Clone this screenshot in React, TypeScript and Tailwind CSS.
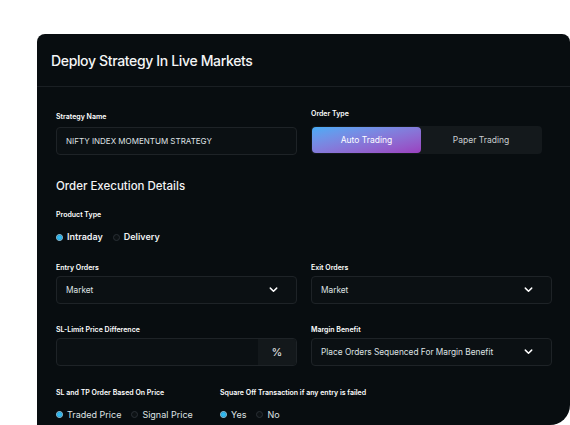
import React from "react";

const Chevron = () => (
  <svg width="11" height="11" viewBox="0 0 24 24" fill="none" stroke="#ffffff" strokeWidth="3.2" strokeLinecap="round" strokeLinejoin="round">
    <path d="M5 9l7 7 7-7" />
  </svg>
);

const Radio = ({ checked, label, bold }: { checked?: boolean; label: string; bold?: boolean }) => (
  <div className="flex items-center gap-[4px]">
    {checked ? (
      <span className="flex h-[7px] w-[7px] items-center justify-center rounded-full border border-[#9fdcf7] bg-[#1a2a33]">
        <span className="h-[5px] w-[5px] rounded-full bg-[#2fb8f0]" />
      </span>
    ) : (
      <span className="h-[7px] w-[7px] rounded-full border border-[#2a3035] bg-[#0d1215]" />
    )}
    <span className={bold ? "text-[9px] font-semibold text-[#eef0f2]" : "text-[9px] text-[#dfe2e4]"}>{label}</span>
  </div>
);

const Label = ({ children, className = "" }: { children: React.ReactNode; className?: string }) => (
  <div className={`text-[7px] font-semibold leading-[9px] text-white ${className}`}>{children}</div>
);

const Select = ({ value }: { value: string }) => (
  <div className="flex h-[28px] items-center justify-between rounded-[4px] border border-[#1e2327] bg-[#0b1013] pl-[9px] pr-[17px]">
    <span className="text-[8.3px] text-[#dfe2e4]">{value}</span>
    <Chevron />
  </div>
);

export default function App() {
  return (
    <div className="h-[425px] w-[570px] overflow-hidden bg-white pl-[37px] pt-[34px]" style={{ fontFamily: "Inter, 'Noto Sans', sans-serif" }}>
      <div className="h-[391px] w-[533px] overflow-hidden rounded-tl-[8px] rounded-tr-[8px] rounded-br-[20px] bg-[#080d10]">
        <div className="flex h-[53px] items-center border-b border-[#1a1f23] px-[14px]">
          <h1 className="text-[14px] font-medium tracking-[-0.35px] text-[#f4f5f6]">Deploy Strategy In Live Markets</h1>
        </div>
        <div className="pl-[19px] pr-[18px]">
          <div className="flex gap-[14px] pt-[22px]">
            <div className="w-[241px]">
              <Label className="mt-[3px] mb-[6px]">Strategy Name</Label>
              <div className="flex h-[28px] items-center rounded-[4px] border border-[#1e2327] bg-[#0b1013] px-[9px]">
                <span className="text-[8px] text-[#dfe2e4]">NIFTY INDEX MOMENTUM STRATEGY</span>
              </div>
            </div>
            <div className="w-[241px]">
              <Label className="mb-[8px]">Order Type</Label>
              <div className="flex h-[28px] w-[231px] items-center rounded-[4px] bg-[#14191c] p-[1px]">
                <div className="flex h-[26px] w-[109px] items-center justify-center rounded-[4px] bg-gradient-to-br from-[#44acf6] to-[#9a3fbf] text-[8.5px] text-white">
                  Auto Trading
                </div>
                <div className="flex flex-1 items-center justify-center text-[8.5px] text-[#c9cdd0]">Paper Trading</div>
              </div>
            </div>
          </div>

          <div className="mt-[23px] text-[11.5px] font-medium text-[#f2f3f4]">Order Execution Details</div>

          <Label className="mt-[15px]">Product Type</Label>
          <div className="mt-[11px] flex items-center gap-[10px]">
            <Radio checked bold label="Intraday" />
            <Radio bold label="Delivery" />
          </div>

          <div className="mt-[19px] flex gap-[14px]">
            <div className="w-[241px]">
              <Label className="mb-[4px]">Entry Orders</Label>
              <Select value="Market" />
            </div>
            <div className="w-[241px]">
              <Label className="mb-[4px]">Exit Orders</Label>
              <Select value="Market" />
            </div>
          </div>

          <div className="mt-[21px] flex gap-[14px]">
            <div className="w-[241px]">
              <Label className="mb-[4px]">SL-Limit Price Difference</Label>
              <div className="flex h-[28px] overflow-hidden rounded-[4px] border border-[#1e2327] bg-[#0b1013]">
                <div className="flex-1" />
                <div className="flex w-[38px] items-center justify-center bg-[#13181b] text-[11px] text-[#e6e8ea]">%</div>
              </div>
            </div>
            <div className="w-[241px]">
              <Label className="mb-[4px]">Margin Benefit</Label>
              <Select value="Place Orders Sequenced For Margin Benefit" />
            </div>
          </div>

          <div className="mt-[22px] flex">
            <div className="w-[164px]">
              <Label>SL and TP Order Based On Price</Label>
              <div className="mt-[11px] flex items-center gap-[10px]">
                <Radio checked label="Traded Price" />
                <Radio label="Signal Price" />
              </div>
            </div>
            <div>
              <Label>Square Off Transaction if any entry is failed</Label>
              <div className="mt-[11px] flex items-center gap-[10px]">
                <Radio checked label="Yes" />
                <Radio label="No" />
              </div>
            </div>
          </div>
        </div>
      </div>
    </div>
  );
}
